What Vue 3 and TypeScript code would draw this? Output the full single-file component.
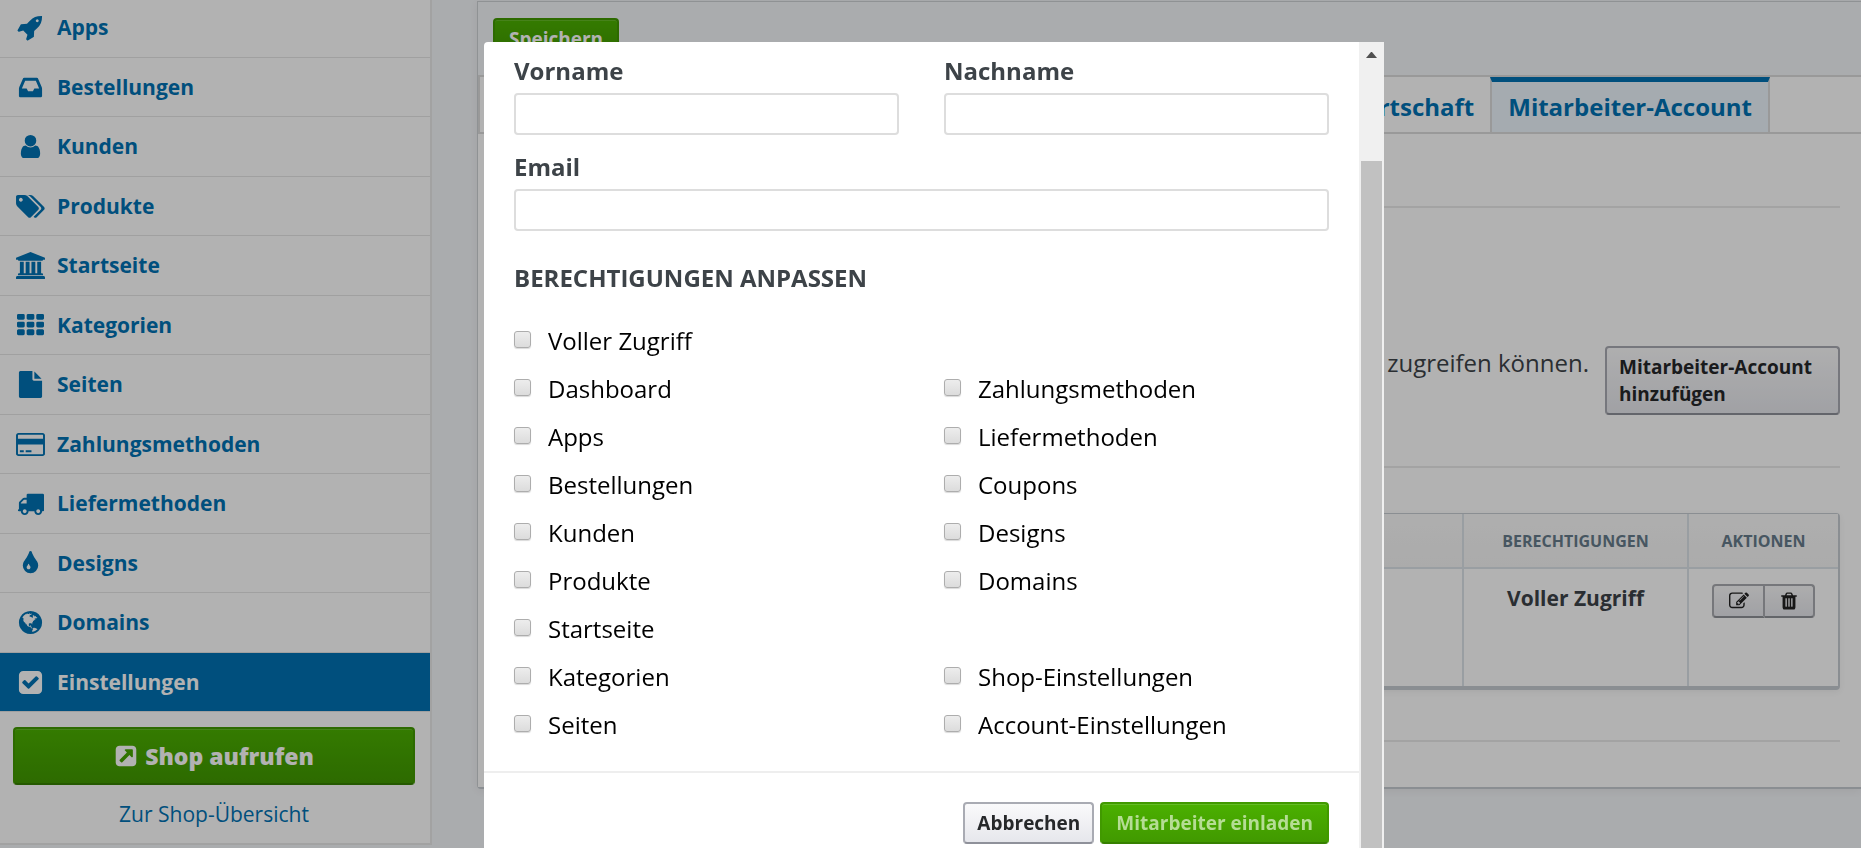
<script setup lang="ts">
import { ref } from 'vue'

interface Icon {
  box: string
  width: number
  path: string
}

interface NavItem {
  label: string
  icon: Icon
  active?: boolean
}

const square = (path: string): Icon => ({ box: '0 0 1792 1792', width: 27, path })
const wide = (path: string): Icon => ({ box: '0 0 1920 1792', width: 29, path })

const rocket = square('M1440 448q0-40-28-68t-68-28-68 28-28 68 28 68 68 28 68-28 28-68zm224-288q0 249-75.5 430.5t-253.5 360.5q-81 80-195 176l-20 379q-2 16-16 26l-384 224q-7 4-16 4-12 0-23-9l-64-64q-13-14-8-32l85-276-281-281-276 85q-3 1-9 1-14 0-23-9l-64-64q-17-19-5-39l224-384q10-14 26-16l379-20q96-114 176-195 188-187 358-258t431-71q14 0 24 9.5t10 22.5z')
const inbox = square('M1151 960h316q-1-3-2.5-8t-2.5-8l-212-496h-708l-212 496q-1 2-2.5 8t-2.5 8h316l95 192h320zm513 30v482q0 26-19 45t-45 19h-1408q-26 0-45-19t-19-45v-482q0-62 25-123l238-552q10-25 36.5-42t52.5-17h832q26 0 52.5 17t36.5 42l238 552q25 61 25 123z')
const user = square('M1536 1399q0 109-62.5 187t-150.5 78h-854q-88 0-150.5-78t-62.5-187q0-85 8.5-160.5t31.5-152 58.5-131 94-89 134.5-34.5q131 128 313 128t313-128q76 0 134.5 34.5t94 89 58.5 131 31.5 152 8.5 160.5zm-256-887q0 159-112.5 271.5t-271.5 112.5-271.5-112.5-112.5-271.5 112.5-271.5 271.5-112.5 271.5 112.5 112.5 271.5z')
const tags = wide('M448 448q0-53-37.5-90.5t-90.5-37.5-90.5 37.5-37.5 90.5 37.5 90.5 90.5 37.5 90.5-37.5 37.5-90.5zm1067 576q0 53-37 90l-491 492q-39 37-91 37-53 0-90-37l-715-716q-38-37-64.5-101t-26.5-117v-416q0-52 38-90t90-38h416q53 0 117 26.5t102 64.5l715 714q37 39 37 91zm384 0q0 53-37 90l-491 492q-39 37-91 37-36 0-59-14t-53-45l470-470q37-37 37-90 0-52-37-91l-715-714q-38-38-102-64.5t-117-26.5h224q53 0 117 26.5t102 64.5l715 714q37 39 37 91z')
const bank = wide('M960 0l960 384v128h-128q0 26-20.5 45t-48.5 19h-1526q-28 0-48.5-19t-20.5-45h-128v-128zm-704 640h256v768h128v-768h256v768h128v-768h256v768h128v-768h256v768h59q28 0 48.5 19t20.5 45v64h-1664v-64q0-26 20.5-45t48.5-19h59v-768zm1595 960q28 0 48.5 19t20.5 45v128h-1920v-128q0-26 20.5-45t48.5-19h1782z')
const grid = square('M512 1248v192q0 40-28 68t-68 28h-320q-40 0-68-28t-28-68v-192q0-40 28-68t68-28h320q40 0 68 28t28 68zm0-512v192q0 40-28 68t-68 28h-320q-40 0-68-28t-28-68v-192q0-40 28-68t68-28h320q40 0 68 28t28 68zm640 512v192q0 40-28 68t-68 28h-320q-40 0-68-28t-28-68v-192q0-40 28-68t68-28h320q40 0 68 28t28 68zm-640-1024v192q0 40-28 68t-68 28h-320q-40 0-68-28t-28-68v-192q0-40 28-68t68-28h320q40 0 68 28t28 68zm640 512v192q0 40-28 68t-68 28h-320q-40 0-68-28t-28-68v-192q0-40 28-68t68-28h320q40 0 68 28t28 68zm640 512v192q0 40-28 68t-68 28h-320q-40 0-68-28t-28-68v-192q0-40 28-68t68-28h320q40 0 68 28t28 68zm-640-1024v192q0 40-28 68t-68 28h-320q-40 0-68-28t-28-68v-192q0-40 28-68t68-28h320q40 0 68 28t28 68zm640 512v192q0 40-28 68t-68 28h-320q-40 0-68-28t-28-68v-192q0-40 28-68t68-28h320q40 0 68 28t28 68zm0-512v192q0 40-28 68t-68 28h-320q-40 0-68-28t-28-68v-192q0-40 28-68t68-28h320q40 0 68 28t28 68z')
const file = square('M1152 512v-472q22 14 36 28l408 408q14 14 28 36h-472zm-128 32q0 40 28 68t68 28h544v1056q0 40-28 68t-68 28h-1344q-40 0-68-28t-28-68v-1600q0-40 28-68t68-28h800v544z')
const card = wide('M1760 128q66 0 113 47t47 113v1216q0 66-47 113t-113 47h-1600q-66 0-113-47t-47-113v-1216q0-66 47-113t113-47h1600zm-1600 128q-13 0-22.5 9.5t-9.5 22.5v224h1664v-224q0-13-9.5-22.5t-22.5-9.5h-1600zm1600 1280q13 0 22.5-9.5t9.5-22.5v-608h-1664v608q0 13 9.5 22.5t22.5 9.5h1600zm-1504-128v-128h256v128h-256zm384 0v-128h384v128h-384z')
const truck = square('M640 1408q0-52-38-90t-90-38-90 38-38 90 38 90 90 38 90-38 38-90zm-384-512h384v-256h-158q-13 0-22 9l-195 195q-9 9-9 22v30zm1280 512q0-52-38-90t-90-38-90 38-38 90 38 90 90 38 90-38 38-90zm256-1088v1024q0 15-4 26.5t-13.5 18.5-16.5 11.5-23.5 6-22.5 2-25.5 0-22.5-.5q0 106-75 181t-181 75-181-75-75-181h-384q0 106-75 181t-181 75-181-75-75-181h-64q-3 0-22.5.5t-25.5 0-22.5-2-23.5-6-16.5-11.5-13.5-18.5-4-26.5q0-26 19-45t45-19v-320q0-8-.5-35t0-38 2.5-34.5 6.5-37 14-30.5 22.5-30l198-198q19-19 50.5-32t58.5-13h160v-192q0-26 19-45t45-19h1024q26 0 45 19t19 45z')
const drop = square('M896 1152q0-36-20-69-1-1-15.5-22.5t-25.5-38-25-44-21-50.5q-4-16-21-16t-21 16q-7 23-21 50.5t-25 44-25.5 38-15.5 22.5q-20 33-20 69 0 53 37.5 90.5t90.5 37.5 90.5-37.5 37.5-90.5zm512-128q0 212-150 362t-362 150-362-150-150-362q0-145 81-275 6-9 62.5-90.5t101-151 99.5-178 83-201.5q9-30 34-47t51-17 51.5 17 33.5 47q28 93 83 201.5t99.5 178 101 151 62.5 90.5q81 127 81 275z')
const globe = square('M896 128q209 0 385.5 103t279.5 279.5 103 385.5-103 385.5-279.5 279.5-385.5 103-385.5-103-279.5-279.5-103-385.5 103-385.5 279.5-279.5 385.5-103zm274 521q-2 1-9.5 9.5t-13.5 9.5q2 0 4.5-5t5-11 3.5-7q6-7 22-15 14-6 52-12 34-8 51 11-2-2 9.5-13t14.5-12q3-2 15-4.5t15-7.5l2-22q-12 1-17.5-7t-6.5-21q0 2-6 8 0-7-4.5-8t-11.5 1-9 1q-10-3-15-7.5t-8-16.5-4-15q-2-5-9.5-10.5t-9.5-10.5q-1-2-2.5-5.5t-3-6.5-4-5.5-5.5-2.5-7 5-7.5 10-4.5 5q-3-2-6-1.5t-4.5 1-4.5 3-5 3.5q-3 2-8.5 3t-8.5 2q15-5-1-11-10-4-16-3 9-4 7.5-12t-8.5-14h5q-1-4-8.5-8.5t-17.5-8.5-13-6q-8-5-34-9.5t-33-.5q-5 6-4.5 10.5t4 14 3.5 12.5q1 6-5.5 13t-6.5 12q0 7 14 15.5t10 21.5q-3 8-16 16t-16 12q-5 8-1.5 18.5t10.5 16.5q2 2 1.5 4t-3.5 4.5-5.5 4-6.5 3.5l-3 2q-11 5-20.5-6t-13.5-26q-7-25-16-30-23-8-29 1-5-13-41-26-25-9-58-4 6-1 0-15-7-15-19-12 3-6 4-17.5t1-13.5q3-13 12-23 1-1 7-8.5t9.5-13.5.5-6q35 4 50-11 5-5 11.5-17t10.5-17q9-6 14-5.5t14.5 5.5 14.5 5q14 1 15.5-11t-7.5-20q12 1 3-17-4-7-8-9-12-4-27 5-8 4 2 8-1-1-9.5 10.5t-16.5 17.5-16-5q-1-1-5.5-13.5t-9.5-13.5q-8 0-16 15 3-8-11-15t-24-8q19-12-8-27-7-4-20.5-5t-19.5 4q-5 7-5.5 11.5t5 8 10.5 5.5 11.5 4 8.5 3q14 10 8 14-2 1-8.5 3.5t-11.5 4.5-6 4q-3 4 0 14t-2 14q-5-5-9-17.5t-7-16.5q7 9-25 6l-10-1q-4 0-16 2t-20.5 1-13.5-8q-4-8 0-20 1-4 4-2-4-3-11-9.5t-10-8.5q-46 15-94 41 6 1 12-1 5-2 13-6.5t10-5.5q34-14 42-7l5-5q14 16 20 25-7-4-30-1-20 6-22 12 7 12 5 18-4-3-11.5-10t-14.5-11-15-5q-16 0-22 1-146 80-235 222 7 7 12 8 4 1 5 9t2.5 11 11.5-3q9 8 3 19 1-1 44 27 19 17 21 21 3 11-10 18-1-2-9-9t-9-4q-3 5 .5 18.5t10.5 12.5q-7 0-9.5 16t-2.5 35.5-1 23.5l2 1q-3 12 5.5 34.5t21.5 19.5q-13 3 20 43 6 8 8 9 3 2 12 7.5t15 10 10 10.5q4 5 10 22.5t14 23.5q-2 6 9.5 20t10.5 23q-1 0-2.5 1t-2.5 1q3 7 15.5 14t15.5 13q1 3 2 10t3 11 8 2q2-20-24-62-15-25-17-29-3-5-5.5-15.5t-4.5-14.5q2 0 6 1.5t8.5 3.5 7.5 4 2 3q-3 7 2 17.5t12 18.5 17 19 12 13q6 6 14 19.5t0 13.5q9 0 20 10.5t17 19.5q5 8 8 26t5 24q2 7 8.5 13.5t12.5 9.5l16 8 13 7q5 2 18.5 10.5t21.5 11.5q10 4 16 4t14.5-2.5 13.5-3.5q15-2 29 15t21 21q36 19 55 11-2 1 .5 7.5t8 15.5 9 14.5 5.5 8.5q5 6 18 15t18 15q6-4 7-9-3 8 7 20t18 10q14-3 14-32-31 15-49-18 0-1-2.5-5.5t-4-8.5-2.5-8.5 0-7.5 5-3q9 0 10-3.5t-2-12.5-4-13q-1-8-11-20t-12-15q-5 9-16 8t-16-9q0 1-1.5 5.5t-1.5 6.5q-13 0-15-1 1-3 2.5-17.5t3.5-22.5q1-4 5.5-12t7.5-14.5 4-12.5-4.5-9.5-17.5-2.5q-19 1-26 20-1 3-3 10.5t-5 11.5-9 7q-7 3-24 2t-24-5q-13-8-22.5-29t-9.5-37q0-10 2.5-26.5t3-25-5.5-24.5q3-2 9-9.5t10-10.5q2-1 4.5-1.5t4.5 0 4-1.5 3-6q-1-1-4-3-3-3-4-3 7 3 28.5-1.5t27.5 1.5q15 11 22-2 0-1-2.5-9.5t-.5-13.5q5 27 29 9 3 3 15.5 5t17.5 5q3 2 7 5.5t5.5 4.5 5-.5 8.5-6.5q10 14 12 24 11 40 19 44 7 3 11 2t4.5-9.5 0-14-1.5-12.5l-1-8v-18l-1-8q-15-3-18.5-12t1.5-18.5 15-18.5q1-1 8-3.5t15.5-6.5 12.5-8q21-19 15-35 7 0 11-9-1 0-5-3t-7.5-5-4.5-2q9-5 2-16 5-3 7.5-11t7.5-10q9 12 21 2 7-8 1-16 5-7 20.5-10.5t18.5-9.5q7 2 8-2t1-12 3-12q4-5 15-9t13-5l17-11q3-4 0-4 18 2 31-11 10-11-6-20 3-6-3-9.5t-15-5.5q3-1 11.5-.5t10.5-1.5q15-10-7-16-17-5-43 12zm-163 877q206-36 351-189-3-3-12.5-4.5t-12.5-3.5q-18-7-24-8 1-7-2.5-13t-8-9-12.5-8-11-7q-2-2-7-6t-7-5.5-7.5-4.5-8.5-2-10 1l-3 1q-3 1-5.5 2.5t-5.5 3-4 3 0 2.5q-21-17-36-22-5-1-11-5.5t-10.5-7-10-1.5-11.5 7q-5 5-6 15t-2 13q-7-5 0-17.5t2-18.5q-3-6-10.5-4.5t-12 4.5-11.5 8.5-9 6.5-8.5 5.5-8.5 7.5q-3 4-6 12t-5 11q-2-4-11.5-6.5t-9.5-5.5q2 10 4 35t5 38q7 31-12 48-27 25-29 40-4 22 12 26 0 7-8 20.5t-7 21.5q0 6 2 16z')
const check = square('M813 1299l614-614q19-19 19-45t-19-45l-102-102q-19-19-45-19t-45 19l-467 467-211-211q-19-19-45-19t-45 19l-102 102q-19 19-19 45t19 45l358 358q19 19 45 19t45-19zm851-883v960q0 119-84.5 203.5t-203.5 84.5h-960q-119 0-203.5-84.5t-84.5-203.5v-960q0-119 84.5-203.5t203.5-84.5h960q119 0 203.5 84.5t84.5 203.5z')

const nav: NavItem[] = [
  { label: 'Apps', icon: rocket },
  { label: 'Bestellungen', icon: inbox },
  { label: 'Kunden', icon: user },
  { label: 'Produkte', icon: tags },
  { label: 'Startseite', icon: bank },
  { label: 'Kategorien', icon: grid },
  { label: 'Seiten', icon: file },
  { label: 'Zahlungsmethoden', icon: card },
  { label: 'Liefermethoden', icon: truck },
  { label: 'Designs', icon: drop },
  { label: 'Domains', icon: globe },
  { label: 'Einstellungen', icon: check, active: true },
]

const tabs = [
  { label: 'Wirtschaft', active: false },
  { label: 'Mitarbeiter-Account', active: true },
]

// Rows of the permission grid; null leaves a cell empty.
const permissions: (string | null)[][] = [
  ['Voller Zugriff', null],
  ['Dashboard', 'Zahlungsmethoden'],
  ['Apps', 'Liefermethoden'],
  ['Bestellungen', 'Coupons'],
  ['Kunden', 'Designs'],
  ['Produkte', 'Domains'],
  ['Startseite', null],
  ['Kategorien', 'Shop-Einstellungen'],
  ['Seiten', 'Account-Einstellungen'],
]

const cells = permissions.flat()
const granted = ref<string[]>([])
const firstName = ref('')
const lastName = ref('')
const email = ref('')
</script>

<template>
  <div class="page">
    <aside class="sidebar">
      <nav>
        <ul class="nav">
          <li v-for="item in nav" :key="item.label" class="nav-row">
            <a href="#" class="nav-link" :class="{ active: item.active }">
              <span class="nav-icon">
                <svg :viewBox="item.icon.box" :width="item.icon.width" height="27" aria-hidden="true">
                  <path :d="item.icon.path" />
                </svg>
              </span>
              {{ item.label }}
            </a>
          </li>
        </ul>
      </nav>
      <div class="sidebar-foot">
        <button type="button" class="btn green shop-btn">
          <svg viewBox="0 0 1792 1792" width="24" height="24" aria-hidden="true">
            <path d="M1408 928v-480q0-26-19-45t-45-19h-480q-42 0-59 39-17 41 14 70l144 144-534 534q-19 19-19 45t19 45l102 102q19 19 45 19t45-19l534-534 144 144q18 19 45 19 12 0 25-5 39-17 39-59zm256-512v960q0 119-84.5 203.5t-203.5 84.5h-960q-119 0-203.5-84.5t-84.5-203.5v-960q0-119 84.5-203.5t203.5-84.5h960q119 0 203.5 84.5t84.5 203.5z" />
          </svg>
          Shop aufrufen
        </button>
        <a href="#" class="overview">Zur Shop-Übersicht</a>
      </div>
    </aside>

    <main class="content">
      <header class="toolbar">
        <button type="button" class="btn green">Speichern</button>
      </header>
      <nav class="tabs">
        <a v-for="tab in tabs" :key="tab.label" href="#" class="tab" :class="{ active: tab.active }">{{ tab.label }}</a>
      </nav>
      <section class="panel">
        <div class="intro">
          <p>zugreifen können.</p>
          <button type="button" class="btn grey add-btn">Mitarbeiter-Account hinzufügen</button>
        </div>
        <div class="table-area">
          <table class="staff">
            <thead>
              <tr>
                <th></th>
                <th class="col-rights">Berechtigungen</th>
                <th class="col-actions">Aktionen</th>
              </tr>
            </thead>
            <tbody>
              <tr>
                <td></td>
                <td>Voller Zugriff</td>
                <td>
                  <div class="group">
                    <button type="button" aria-label="Bearbeiten">
                      <svg viewBox="0 0 1792 1792" width="20" height="20" aria-hidden="true">
                        <path d="M888 1184l116-116-152-152-116 116v56h96v96h56zm440-720q-16-16-33 1l-350 350q-17 17-1 33t33-1l350-350q17-17 1-33zm80 594v190q0 119-84.5 203.5t-203.5 84.5h-832q-119 0-203.5-84.5t-84.5-203.5v-832q0-119 84.5-203.5t203.5-84.5h832q63 0 117 25 15 7 18 23 3 17-9 29l-49 49q-14 14-32 8-23-6-45-6h-832q-66 0-113 47t-47 113v832q0 66 47 113t113 47h832q66 0 113-47t47-113v-126q0-13 9-22l64-64q15-15 35-7t20 29zm-96-738l288 288-672 672h-288v-288zm444 132l-92 92-288-288 92-92q28-28 68-28t68 28l152 152q28 28 28 68t-28 68z" />
                      </svg>
                    </button>
                    <button type="button" aria-label="Löschen">
                      <svg viewBox="0 0 1792 1792" width="20" height="20" aria-hidden="true">
                        <path d="M704 1376v-704q0-14-9-23t-23-9h-64q-14 0-23 9t-9 23v704q0 14 9 23t23 9h64q14 0 23-9t9-23zm256 0v-704q0-14-9-23t-23-9h-64q-14 0-23 9t-9 23v704q0 14 9 23t23 9h64q14 0 23-9t9-23zm256 0v-704q0-14-9-23t-23-9h-64q-14 0-23 9t-9 23v704q0 14 9 23t23 9h64q14 0 23-9t9-23zm-544-992h448l-48-117q-7-9-17-11h-317q-10 2-17 11zm928 32v64q0 14-9 23t-23 9h-96v948q0 83-47 143.5t-113 60.5h-832q-66 0-113-58.5t-47-141.5v-952h-96q-14 0-23-9t-9-23v-64q0-14 9-23t23-9h309l70-167q15-37 54-63t79-26h320q40 0 79 26t54 63l70 167h309q14 0 23 9t9 23z" />
                      </svg>
                    </button>
                  </div>
                </td>
              </tr>
            </tbody>
          </table>
        </div>
      </section>
    </main>

    <div class="overlay">
      <div class="modal" role="dialog" aria-modal="true" aria-label="Mitarbeiter einladen">
        <form class="form" @submit.prevent>
          <div class="form-body">
            <div class="fields">
              <div class="field">
                <label for="first-name">Vorname</label>
                <input id="first-name" v-model="firstName" type="text" />
              </div>
              <div class="field">
                <label for="last-name">Nachname</label>
                <input id="last-name" v-model="lastName" type="text" />
              </div>
              <div class="field full">
                <label for="email">Email</label>
                <input id="email" v-model="email" type="email" />
              </div>
            </div>
            <h3>Berechtigungen anpassen</h3>
            <div class="permissions">
              <div v-for="(name, i) in cells" :key="i">
                <label v-if="name" class="permission">
                  <input v-model="granted" type="checkbox" :value="name" />
                  <span>{{ name }}</span>
                </label>
              </div>
            </div>
          </div>
          <footer class="form-foot">
            <button type="button" class="btn grey">Abbrechen</button>
            <button type="submit" class="btn green muted">Mitarbeiter einladen</button>
          </footer>
        </form>
        <div class="scrollbar" aria-hidden="true">
          <svg viewBox="0 0 11 6" width="11" height="6"><path d="M5 0h1l5 6H0z" /></svg>
          <div class="thumb"></div>
        </div>
      </div>
    </div>
  </div>
</template>

<style>
body {
  background: #f4f6f9;
}
</style>

<style scoped>
.page {
  display: flex;
  align-items: flex-start;
  height: 100vh;
  overflow: hidden;
  font-family: "Open Sans", "Noto Sans", sans-serif;
  color: #3d4348;
}

.page *,
.page *::before {
  box-sizing: border-box;
}

svg {
  fill: currentColor;
  flex: none;
}

/* Sidebar */
.sidebar {
  flex: none;
  width: 432px;
  background: #fff;
  border-right: 2px solid #e9e9e9;
  border-bottom: 2px solid #e9e9e9;
}

.nav {
  list-style: none;
  margin: 0;
  padding: 0;
}

.nav-row {
  height: 60px;
  border-bottom: 1px solid #e6e6e6;
}

.nav-row:nth-child(even) {
  height: 59px;
}

.nav-row:first-child {
  height: 58px;
}

.nav-link {
  display: flex;
  align-items: center;
  gap: 12px;
  height: 58px;
  padding-left: 16px;
  color: #0072b3;
  font-size: 21px;
  font-weight: 700;
  text-decoration: none;
}

.nav-row:first-child .nav-link {
  height: 54px;
}

.nav-link.active {
  background: #0072b3;
  color: #fff;
}

.nav-icon {
  display: flex;
  justify-content: center;
  width: 29px;
}

.sidebar-foot {
  display: flex;
  flex-direction: column;
  align-items: center;
  padding: 15px 15px 14px 13px;
}

.overview {
  margin-top: 14px;
  color: #0072b3;
  font-size: 21px;
  line-height: 30px;
  text-decoration: none;
}

/* Buttons */
.btn {
  height: 42px;
  padding: 0 12px;
  border-radius: 4px;
  font-family: inherit;
  font-size: 19px;
  font-weight: 700;
  line-height: 27px;
  white-space: nowrap;
}

.btn.green {
  padding: 0 14px;
  border: 2px solid #419900;
  border-bottom-color: #368000;
  background: linear-gradient(#4bb000, #419900);
  box-shadow: inset 0 1px 0 rgba(255, 255, 255, 0.15);
  color: #fff;
}

.btn.green.muted {
  color: #b5dd94;
}

.btn.grey {
  border: 2px solid #a9abb3;
  border-bottom-color: #8f919a;
  background: linear-gradient(#fafafb, #e6e7ec);
  color: #26282a;
}

.btn.shop-btn {
  display: flex;
  align-items: center;
  justify-content: center;
  gap: 7px;
  width: 100%;
  height: 58px;
  font-size: 23px;
  font-weight: 800;
}

/* Content */
.content {
  flex: 1;
  min-width: 0;
  margin: 1px 0 0 45px;
  border: 1px solid #cdd1d4;
  border-right: 0;
  border-bottom: 2px solid #c6ccd1;
  border-radius: 0 0 0 4px;
  box-shadow: 0 2px 8px rgba(0, 0, 0, 0.06);
}

.toolbar {
  height: 73px;
  padding: 16px 15px;
}

.tabs {
  display: flex;
  justify-content: flex-end;
  height: 59px;
  padding-right: 91px;
  border: 2px solid #dcdcdc;
  border-right: 0;
  background: #fff;
}

.tab {
  padding: 5px 16px 0;
  color: #0072b3;
  font-size: 24px;
  font-weight: 700;
  line-height: 50px;
  text-decoration: none;
}

.tab.active {
  padding-top: 0;
  border: solid #dcdcdc;
  border-width: 0 2px;
  border-top: 5px solid #0072b3;
  background: #ecf5fd;
}

.panel {
  padding: 72px 21px 45px;
  background: #fff;
}

.intro {
  display: flex;
  align-items: flex-start;
  justify-content: flex-end;
  gap: 16px;
  height: 262px;
  padding-top: 138px;
  border: solid #eaeaea;
  border-width: 2px 0;
}

.intro p {
  margin: 0;
  font-size: 24px;
  font-weight: 400;
  line-height: 34px;
}

.btn.add-btn {
  width: 235px;
  height: 69px;
  text-align: left;
  white-space: normal;
}

.table-area {
  padding: 45px 0 50px;
  border-bottom: 2px solid #eaeaea;
}

.staff {
  width: 100%;
  border: 1px solid #c6ccd1;
  border-right-width: 2px;
  border-bottom-width: 4px;
  border-radius: 4px;
  border-spacing: 0;
  box-shadow: 0 2px 6px rgba(0, 0, 0, 0.06);
  table-layout: fixed;
  text-align: center;
}

.staff th {
  height: 55px;
  padding: 0;
  border-bottom: 2px solid #dbe2e8;
  background: linear-gradient(#fafafa, #f5f5f5);
  color: #667c8c;
  font-size: 16px;
  font-weight: 700;
  text-transform: uppercase;
}

.staff td {
  height: 117px;
  padding: 15px 0 0;
  font-size: 21px;
  font-weight: 700;
  line-height: 29px;
  vertical-align: top;
}

.staff th + th,
.staff td + td {
  border-left: 2px solid #dbe2e8;
}

.col-rights {
  width: 225px;
}

.col-actions {
  width: 151px;
}

.group {
  display: inline-flex;
}

.group button {
  display: flex;
  align-items: center;
  justify-content: center;
  width: 53px;
  height: 34px;
  padding: 0;
  border: 2px solid #a9abb0;
  border-bottom-color: #8f9197;
  border-radius: 4px 0 0 4px;
  background: linear-gradient(#f8f8f9, #e6e7ec);
  color: #222;
}

.group button + button {
  width: 50px;
  border-left: 0;
  border-radius: 0 4px 4px 0;
}

/* Modal */
.overlay {
  position: fixed;
  inset: 0;
  display: flex;
  justify-content: center;
  padding: 42px 0 0 7px;
  background: rgba(0, 0, 0, 0.3);
}

.modal {
  display: flex;
  width: 900px;
  overflow: hidden;
  border-radius: 4px 0 0;
  background: #fff;
}

.form {
  flex: 1;
  min-width: 0;
}

.form-body {
  padding: 12px 30px 21px;
  border-bottom: 2px solid #eee;
}

.fields {
  display: grid;
  grid-template-columns: 1fr 1fr;
  gap: 15px 45px;
}

.field {
  display: flex;
  flex-direction: column;
  gap: 6px;
}

.field.full {
  grid-column: 1 / -1;
}

.field label {
  font-size: 24px;
  font-weight: 700;
  line-height: 33px;
}

.field input {
  width: 100%;
  height: 42px;
  padding: 0 10px;
  border: 2px solid #ddd;
  border-radius: 4px;
  background: #fff;
  font: inherit;
  font-size: 20px;
}

h3 {
  margin: 29px 0 22px;
  font-size: 24px;
  font-weight: 700;
  line-height: 36px;
  text-transform: uppercase;
}

.permissions {
  display: grid;
  grid-template-columns: 1fr 1fr;
  grid-auto-rows: 48px;
  column-gap: 45px;
}

.permission {
  display: flex;
  align-items: flex-start;
  gap: 17px;
  color: #000;
  font-size: 24px;
  line-height: 46px;
}

.permission input {
  appearance: none;
  width: 17px;
  height: 17px;
  margin: 13px 0 0;
  border: 1px solid #adadad;
  border-radius: 3px;
  background: linear-gradient(#ededed, #dcdcdc);
  box-shadow: 0 1px 1px rgba(0, 0, 0, 0.15);
}

.permission input:checked {
  background: #0072b3;
}

.form-foot {
  display: flex;
  justify-content: flex-end;
  gap: 6px;
  padding: 29px 30px;
}

.scrollbar {
  display: flex;
  flex-direction: column;
  align-items: center;
  width: 25px;
  padding-top: 10px;
  background: #f0f0f0;
  color: #505050;
}

.thumb {
  flex: 1;
  width: 21px;
  margin-top: 103px;
  background: #c1c1c1;
}
</style>
